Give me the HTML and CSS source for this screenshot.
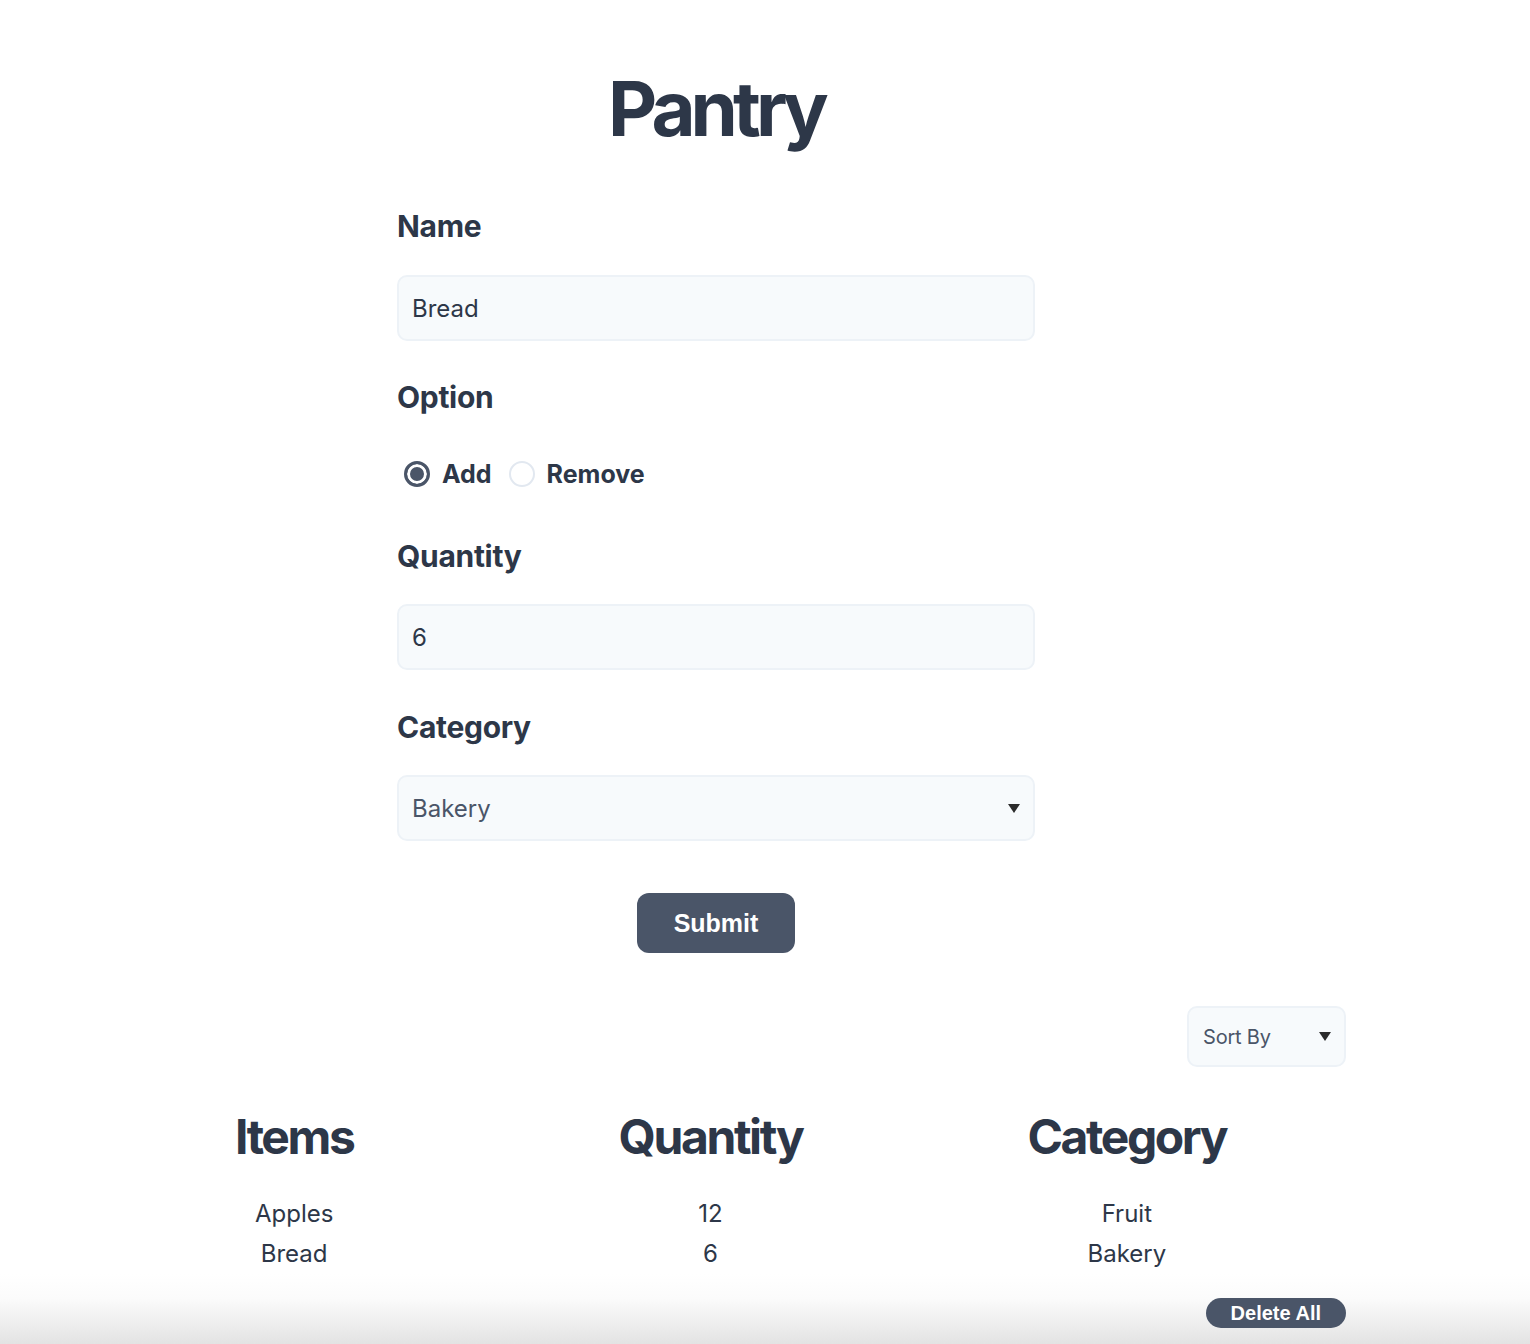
FILE: index.html
```html
<!DOCTYPE html>
<html lang="en">
<head>
<meta charset="utf-8">
<title>Pantry</title>
<link rel="stylesheet" href="styles.css">
</head>
<body>
<main class="page">
  <h1 class="title">Pantry</h1>
  <form class="form">
    <label class="field-label label-name" for="name">Name</label>
    <input class="text-input input-name" id="name" type="text" value="Bread">
    <div class="field-label label-option">Option</div>
    <div class="radio-row">
      <label class="radio"><input type="radio" name="opt" checked><span>Add</span></label>
      <label class="radio"><input type="radio" name="opt"><span>Remove</span></label>
    </div>
    <label class="field-label label-qty" for="qty">Quantity</label>
    <input class="text-input input-qty" id="qty" type="text" value="6">
    <label class="field-label label-cat" for="cat">Category</label>
    <div class="select-wrap cat-wrap">
      <select class="select" id="cat"><option>Bakery</option></select>
    </div>
    <div class="submit-row"><button type="button" class="submit">Submit</button></div>
  </form>
  <div class="sort-row">
    <div class="select-wrap sort-wrap">
      <select class="sort"><option>Sort By</option></select>
    </div>
  </div>
  <div class="table">
    <div class="col">
      <h2 class="col-head">Items</h2>
      <div class="cell first">Apples</div>
      <div class="cell">Bread</div>
    </div>
    <div class="col">
      <h2 class="col-head">Quantity</h2>
      <div class="cell first">12</div>
      <div class="cell">6</div>
    </div>
    <div class="col">
      <h2 class="col-head">Category</h2>
      <div class="cell first">Fruit</div>
      <div class="cell">Bakery</div>
    </div>
  </div>
</main>
<footer class="footer">
  <div class="footer-inner">
    <button type="button" class="delete">Delete All</button>
  </div>
</footer>
</body>
</html>
```

FILE: styles.css
```css
* { box-sizing: border-box; }
html, body { margin: 0; padding: 0; background: #ffffff; }
body {
  font-family: Inter, "Noto Sans", sans-serif;
  color: #2d3748;
  height: 1344px;
  overflow: hidden;
}
.page {
  width: 1260px;
  margin-left: 86px;
  padding-top: 70px;
}
.title {
  margin: 0;
  text-align: center;
  font-size: 76px;
  line-height: 76px;
  font-weight: 700;
  letter-spacing: -0.065em;
  padding-left: 0;
}
.form {
  width: 638px;
  margin: 0 auto;
  display: flex;
  flex-direction: column;
}
.field-label {
  display: block;
  font-size: 30px;
  line-height: 36px;
  font-weight: 700;
  letter-spacing: -0.01em;
  color: #2d3748;
}
.label-name { margin-top: 62px; }
.label-option { margin-top: 38px; }
.label-qty { margin-top: 47px; }
.label-cat { margin-top: 39px; }
.text-input, .select, .sort {
  font-family: Inter, "Noto Sans", sans-serif;
  background: #f7fafc;
  border: 2px solid #edf2f7;
  border-radius: 10px;
  outline: none;
}
.text-input {
  width: 100%;
  height: 66px;
  padding: 0 13px;
  font-size: 24px;
  color: #2d3748;
}
.input-name { margin-top: 31px; }
.input-qty { margin-top: 30px; }
.radio-row {
  margin-top: 42px;
  height: 34px;
  display: flex;
  align-items: center;
}
.radio {
  display: inline-flex;
  align-items: center;
  font-size: 25px;
  font-weight: 700;
  line-height: 34px;
  color: #2d3748;
}
.radio + .radio { margin-left: 10px; }
.radio input {
  appearance: none;
  -webkit-appearance: none;
  width: 26px;
  height: 26px;
  margin: 0 12px 0 7px;
  border-radius: 50%;
  border: 2px solid #e2e8f0;
  background: #ffffff;
}
.radio input:checked {
  border: 3px solid #4a5568;
  background: #4a5568;
  box-shadow: inset 0 0 0 3px #ffffff;
}
.select-wrap { position: relative; }
.select-wrap::after {
  content: "";
  position: absolute;
  right: 15px;
  top: 50%;
  margin-top: -4px;
  border-left: 6.5px solid transparent;
  border-right: 6.5px solid transparent;
  border-top: 9px solid #2b2b2b;
  pointer-events: none;
}
.cat-wrap { margin-top: 30px; }
.select {
  appearance: none;
  -webkit-appearance: none;
  width: 100%;
  height: 66px;
  padding: 0 13px;
  font-size: 24px;
  color: #4a5568;
}
.submit-row {
  margin-top: 52px;
  display: flex;
  justify-content: center;
}
.submit {
  width: 158px;
  height: 60px;
  border: none;
  border-radius: 12px;
  background: #4a5568;
  color: #ffffff;
  font-family: "Liberation Sans", Arial, sans-serif;
  font-weight: 700;
  font-size: 25px;
}
.sort-row {
  margin-top: 53px;
  display: flex;
  justify-content: flex-end;
}
.sort-wrap { width: 159px; }
.sort-wrap::after { margin-top: -5px; }
.sort {
  appearance: none;
  -webkit-appearance: none;
  width: 159px;
  height: 61px;
  padding: 0 14px;
  font-size: 20px;
  letter-spacing: -0.01em;
  color: #4a5568;
}
.table {
  width: 1249px;
  margin-top: 46px;
  display: grid;
  grid-template-columns: repeat(3, 1fr);
}
.col {
  display: flex;
  flex-direction: column;
  align-items: center;
}
.col-head {
  margin: 0 0 33px 0;
  font-size: 48px;
  line-height: 48px;
  font-weight: 700;
  letter-spacing: -0.05em;
  color: #2d3748;
}
.cell {
  font-size: 24px;
  line-height: 40px;
  height: 40px;
  color: #2d3748;
}
.footer {
  height: 70px;
  background: linear-gradient(to bottom, #ffffff 0%, #fbfbfb 35%, #e3e3e3 100%);
}
.footer-inner {
  width: 1260px;
  margin-left: 86px;
  padding-top: 24px;
  display: flex;
  justify-content: flex-end;
}
.delete {
  height: 30px;
  padding: 0 25px;
  border: none;
  border-radius: 15px;
  background: #4a5568;
  color: #ffffff;
  font-family: "Liberation Sans", Arial, sans-serif;
  font-weight: 700;
  font-size: 20px;
  line-height: 30px;
}
```
